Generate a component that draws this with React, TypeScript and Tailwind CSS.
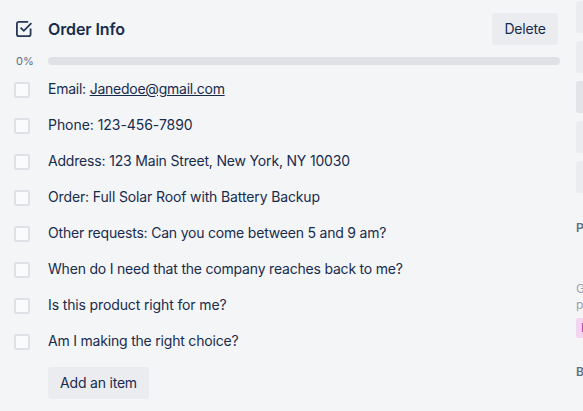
const items = [
  { text: 'Phone: 123-456-7890', spacing: 'tracking-[-0.05px]' },
  { text: 'Address: 123 Main Street, New York, NY 10030', spacing: 'tracking-[-0.18px]' },
  { text: 'Order: Full Solar Roof with Battery Backup', spacing: 'tracking-[-0.13px]' },
  { text: 'Other requests: Can you come between 5 and 9 am?', spacing: 'tracking-[-0.2px]' },
  { text: 'When do I need that the company reaches back to me?', spacing: 'tracking-[-0.2px]' },
  { text: 'Is this product right for me?', spacing: 'tracking-[-0.13px]' },
  { text: 'Am I making the right choice?', spacing: 'tracking-[-0.2px]' },
];

function Row({ children, spacing }: { children: React.ReactNode; spacing: string }) {
  return (
    <div className="flex h-9 items-center">
      <span className="ml-[14px] mr-[18px] h-4 w-4 rounded-[2px] border-2 border-[#dfe1e6] bg-[#fafbfc]" />
      <span className={`pb-[2px] ${spacing}`}>{children}</span>
    </div>
  );
}

export default function App() {
  return (
    <div className="flex h-[411px] w-[583px] overflow-hidden bg-[#f4f5f7] font-['Inter',sans-serif] text-sm tracking-[-0.2px] text-[#172b4d]">
      <main className="w-[560px] shrink-0">
        <div className="flex h-[45px] items-end justify-between">
          <div className="flex h-8 items-center">
            <svg className="ml-[15px] mr-[15px] h-[18px] w-[18px]" viewBox="0 0 18 18" fill="none" stroke="#253858" strokeWidth="1.8">
              <path d="M15.6 8.5v5.7a1.9 1.9 0 0 1-1.9 1.9H3.8a1.9 1.9 0 0 1-1.9-1.9V3.8a1.9 1.9 0 0 1 1.9-1.9h9.4" />
              <path d="M5.6 7.6l3.2 3.2 7.6-7.6" />
            </svg>
            <h2 className="text-base font-semibold tracking-[-0.1px] text-[#172b4d]">Order Info</h2>
          </div>
          <button className="mr-[2px] h-8 w-[66px] rounded-[3px] bg-[#ebecf0] text-[#172b4d]">Delete</button>
        </div>
        <div className="mt-2 flex h-4 items-center">
          <span className="w-[48px] pl-4 pt-[2px] text-[11px] tracking-normal text-[#5e6c84]">0%</span>
          <div className="h-2 flex-1 rounded-full bg-[#dfe1e6]" />
        </div>
        <div className="mt-[3px]">
          <Row spacing="tracking-[-0.24px]">
            Email: <u>Janedoe@gmail.com</u>
          </Row>
          {items.map((item) => (
            <Row key={item.text} spacing={item.spacing}>{item.text}</Row>
          ))}
        </div>
        <button className="ml-12 mt-[7px] h-8 w-[101px] rounded-[3px] bg-[#ebecf0] text-[#172b4d]">Add an item</button>
      </main>
      <aside className="ml-4 w-[168px] shrink-0 pt-px tracking-normal">
        <div className="flex flex-col gap-2">
          <div className="h-8 rounded-[3px] bg-[#ebecf0]" />
          <div className="h-8 rounded-[3px] bg-[#ebecf0]" />
          <div className="h-8 rounded-[3px] bg-[#e2e4e9]" />
          <div className="h-8 rounded-[3px] bg-[#ebecf0]" />
          <div className="h-8 rounded-[3px] bg-[#ebecf0]" />
        </div>
        <p className="mt-[27px] text-xs font-semibold leading-4 text-[#5e6c84]">Power-Ups</p>
        <p className="mt-[45px] text-xs leading-[16px] text-[#97a0af]">Get unlimited<br />power-ups</p>
        <div className="mt-[5px] h-5 w-20 rounded-[3px] bg-[#f3d5f0] pl-[5px] text-xs leading-5 text-[#a23fa0]">In</div>
        <p className="mt-[26px] text-xs font-semibold leading-4 text-[#5e6c84]">Butler</p>
      </aside>
    </div>
  );
}
